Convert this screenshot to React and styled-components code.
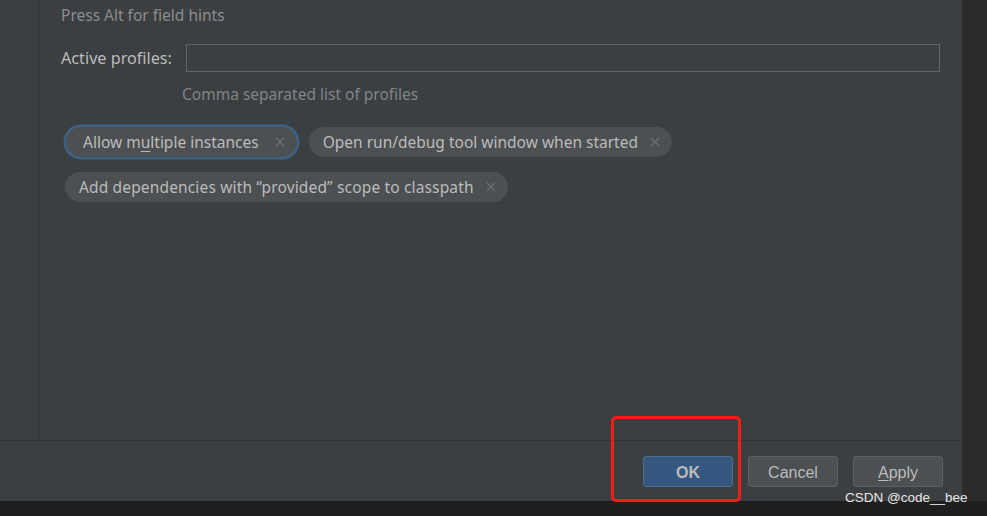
import React from 'react';
import styled, { createGlobalStyle, css } from 'styled-components';

const GlobalStyle = createGlobalStyle`
  html, body {
    margin: 0;
    padding: 0;
    background: #222222;
  }
  body {
    font-family: "Noto Sans", "Liberation Sans", sans-serif;
  }
`;

const tags = [
  { id: 'multi', label: 'Allow m', mnemonic: 'u', rest: 'ltiple instances', focused: true },
  { id: 'debug', label: 'Open run/debug tool window when started' },
  { id: 'provided', label: 'Add dependencies with \u201Cprovided\u201D scope to classpath', wide: true },
];

const CloseIcon = () => (
  <svg width="10" height="10" viewBox="0 0 10 10">
    <path d="M1 1 L9 9 M9 1 L1 9" stroke="#6e7072" strokeWidth="1.2" fill="none" />
  </svg>
);

const App = () => {
  return (
    <Screen>
      <GlobalStyle />
      <Dialog>
        <Body>
          <Sidebar />
          <Content>
            <Hint>Press Alt for field hints</Hint>
            <FieldRow>
              <Label>Active profiles:</Label>
              <Input />
            </FieldRow>
            <Comment>Comma separated list of profiles</Comment>
            <Tags>
              {tags.map((t) => (
                <Tag key={t.id} $focused={t.focused} $wide={t.wide}>
                  <span>
                    {t.label}
                    {t.mnemonic && <u>{t.mnemonic}</u>}
                    {t.rest}
                  </span>
                  <CloseIcon />
                </Tag>
              ))}
            </Tags>
          </Content>
        </Body>
        <Footer>
          <Button $primary>OK</Button>
          <Button>Cancel</Button>
          <Button>
            <u>A</u>pply
          </Button>
          <Highlight />
        </Footer>
      </Dialog>
      <RightStrip />
      <Watermark>CSDN @code__bee</Watermark>
    </Screen>
  );
};

const Screen = styled.div`
  position: relative;
  width: 987px;
  height: 516px;
  display: flex;
  background: #1f1f1f;
  overflow: hidden;
`;

const Dialog = styled.div`
  width: 962px;
  height: 501px;
  background: #3c3f41;
  display: flex;
  flex-direction: column;
`;

const RightStrip = styled.div`
  flex: 1;
  height: 501px;
  background: #2b2b2b;
`;

const Body = styled.div`
  height: 440px;
  display: flex;
  border-bottom: 1px solid #2f3133;
`;

const Sidebar = styled.div`
  width: 38px;
  border-right: 1px solid #323436;
`;

const Content = styled.div`
  flex: 1;
  padding: 4px 22px 0 22px;
  display: flex;
  flex-direction: column;
`;

const Hint = styled.div`
  color: #8a8c8e;
  font-size: 15.5px;
  line-height: 22px;
`;

const FieldRow = styled.div`
  margin-top: 18px;
  display: flex;
  align-items: center;
  gap: 14px;
`;

const Label = styled.div`
  color: #bbbbbb;
  font-size: 16.2px;
  white-space: nowrap;
`;

const Input = styled.div`
  flex: 1;
  height: 26px;
  border: 1px solid #646464;
  background: #3c3f41;
`;

const Comment = styled.div`
  margin: 11px 0 0 121px;
  color: #7f8488;
  font-size: 15.5px;
  line-height: 22px;
`;

const Tags = styled.div`
  margin-top: 22px;
  padding-left: 4px;
  display: flex;
  flex-wrap: wrap;
  gap: 15px 11px;
  width: 700px;
`;

const Tag = styled.div`
  display: inline-flex;
  align-items: center;
  gap: 12px;
  height: 30px;
  padding: 0 12px 0 14px;
  border-radius: 15px;
  background: #4c5052;
  color: #bbbbbb;
  font-size: 15.5px;
  white-space: nowrap;
  box-sizing: border-box;

  span {
    letter-spacing: ${(p) => (p.$wide ? '0.15px' : '0')};
  }

  u {
    text-decoration-thickness: 1px;
    text-underline-offset: 3px;
  }

  ${(p) =>
    p.$focused &&
    css`
      box-shadow: 0 0 0 2.5px #3d6185;
      gap: 16px;
      padding-left: 17px;
      margin-left: 1px;
      margin-right: 1px;
    `}
`;

const Footer = styled.div`
  position: relative;
  flex: 1;
  display: flex;
  justify-content: flex-end;
  align-items: flex-start;
  gap: 15px;
  padding: 15px 19px 0 0;
`;

const Button = styled.button`
  width: 90px;
  height: 31px;
  border-radius: 3px;
  font-family: "Liberation Sans", Arial, sans-serif;
  font-size: 16px;
  color: #bbbbbb;
  background: ${(p) => (p.$primary ? '#365880' : '#4c5052')};
  border: 1px solid ${(p) => (p.$primary ? '#4c708c' : '#5e6060')};
  font-weight: ${(p) => (p.$primary ? 700 : 400)};
  padding: 2px 0 0;

  u {
    text-underline-offset: 2px;
  }
`;

const Highlight = styled.div`
  position: absolute;
  left: 611px;
  top: -25px;
  width: 124px;
  height: 80px;
  border: 3px solid #f01e14;
  border-radius: 5px;
`;

const Watermark = styled.div`
  position: absolute;
  left: 845px;
  top: 490px;
  font-family: "Liberation Sans", Arial, sans-serif;
  font-size: 13.5px;
  color: #e6e6e6;
  white-space: nowrap;
`;

export default App;
